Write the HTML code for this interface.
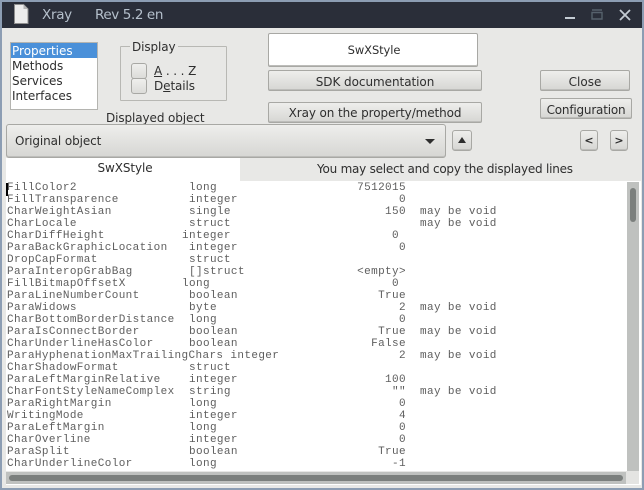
<!DOCTYPE html>
<html><head><meta charset="utf-8"><style>
*{box-sizing:border-box}
html,body{margin:0;padding:0;width:644px;height:490px;overflow:hidden;background:#8c9db3}
body{position:relative;font-family:"DejaVu Sans","Liberation Sans",sans-serif;font-size:12px;color:#2e2e2e}
.a{position:absolute}
.btn{position:absolute;border:1px solid #a8a8a4;border-radius:2px;background:linear-gradient(#eeeeec,#d6d6d3);text-align:center;color:#2e2e2e;white-space:nowrap;overflow:hidden;box-shadow:inset 0 -1px 0 #bdbdba}
.t{position:absolute;white-space:nowrap}
#code{position:absolute;left:6px;top:181px;width:634px;height:290px;background:#fff;overflow:hidden}
.r{position:absolute;left:1px;height:12px;width:620px;font:11px/12px "Liberation Mono",monospace;letter-spacing:.38px;color:#5e5e5e;white-space:pre;margin-top:1px}
.r span{position:absolute;top:0}
.r .n{left:0}.r .y{left:182px}.r .z{left:175px}.r .v{right:221px;text-align:right}.r .m{left:413px}
</style></head><body>
<div class="a" style="left:2px;top:2px;width:640px;height:486px;background:#e8e8e6"></div>
<div class="a" style="left:2px;top:2px;width:640px;height:26px;background:#2a2e39"></div>
<svg class="a" style="left:14px;top:4px" width="15" height="20" viewBox="0 0 15 20"><path d="M0.5 0.5H9.5L14 5V19.5H0.5Z" fill="#ececec" stroke="#8f8f8f"/><path d="M9.5 0.5L14 5H9.5Z" fill="#b5b5b5"/></svg>
<div class="t" style="left:42px;top:7px;font-size:13.5px;color:#b5c0cc;letter-spacing:-.3px">Xray</div>
<div class="t" style="left:95px;top:7px;font-size:13.5px;color:#b5c0cc;letter-spacing:-.4px">Rev 5.2 en</div>
<div class="a" style="left:565px;top:17px;width:10px;height:2px;background:#c4ccd4"></div>
<svg class="a" style="left:591px;top:9px" width="12" height="11"><path d="M1 1H11M1 3.5H11V10H1ZM1 3.5V10" fill="none" stroke="#56616c" stroke-width="1.4"/></svg>
<svg class="a" style="left:619px;top:9px" width="12" height="12"><path d="M1 1L11 11M11 1L1 11" stroke="#c4ccd4" stroke-width="1.8"/></svg>

<div class="a" style="left:10px;top:42px;width:88px;height:68px;background:#fff;border:1px solid #b4b4b0"></div>
<div class="a" style="left:11px;top:43px;width:86px;height:15px;background:#4a90d9"></div>
<div class="t" style="left:12px;top:44px;font-size:12px;line-height:15px;color:#fff">Properties</div>
<div class="t" style="left:12px;top:59px;font-size:12px;line-height:15px">Methods</div>
<div class="t" style="left:12px;top:74px;font-size:12px;line-height:15px">Services</div>
<div class="t" style="left:12px;top:89px;font-size:12px;line-height:15px">Interfaces</div>

<div class="a" style="left:120px;top:46px;width:107px;height:55px;border:1px solid #b8b8b4;border-radius:1px"></div>
<div class="t" style="left:130px;top:39px;padding:0 2px;height:15px;background:#e8e8e6;font-size:12px;line-height:16px;letter-spacing:-.1px">Display</div>
<div class="a" style="left:131px;top:63px;width:16px;height:16px;border:1px solid #a8a8a4;border-radius:3px;background:linear-gradient(#efefed,#dcdcd9)"></div>
<div class="a" style="left:131px;top:78px;width:16px;height:16px;border:1px solid #a8a8a4;border-radius:3px;background:linear-gradient(#efefed,#dcdcd9)"></div>
<div class="t" style="left:154px;top:64px;font-size:12px;line-height:15px;letter-spacing:-.1px"><u>A</u> . . . Z</div>
<div class="t" style="left:154px;top:79px;font-size:12px;line-height:15px;letter-spacing:-.1px">D<u>e</u>tails</div>
<div class="t" style="left:106px;top:111px;font-size:12px;line-height:15px;letter-spacing:-.1px">Displayed object</div>

<div class="btn" style="left:268px;top:33px;width:210px;height:34px;background:#fff;line-height:32px;font-size:11.5px;letter-spacing:-.1px;padding-left:2px">SwXStyle</div>
<div class="btn" style="left:268px;top:70px;width:214px;height:21px;line-height:22px;font-size:12px;letter-spacing:-.05px">SDK documentation</div>
<div class="btn" style="left:268px;top:102px;width:214px;height:21px;line-height:21px;font-size:12px;letter-spacing:-.1px">Xray on the property/method</div>
<div class="btn" style="left:540px;top:70px;width:90px;height:21px;line-height:22px;font-size:12px">Close</div>
<div class="btn" style="left:540px;top:98px;width:92px;height:21px;line-height:22px;font-size:12px;letter-spacing:-.2px">Configuration</div>

<div class="btn" style="left:6px;top:124px;width:440px;height:34px;text-align:left;padding-left:8px;line-height:32px;font-size:12px;letter-spacing:-.1px;border-radius:3px">Original object</div>
<div class="a" style="left:425px;top:139px;width:0;height:0;border-left:5px solid transparent;border-right:5px solid transparent;border-top:5px solid #2e2e2e"></div>
<div class="btn" style="left:452px;top:130px;width:20px;height:21px;border-radius:3px"></div>
<div class="a" style="left:458px;top:137px;width:0;height:0;border-left:4px solid transparent;border-right:4px solid transparent;border-bottom:6px solid #2e2e2e"></div>
<div class="btn" style="left:580px;top:130px;width:18px;height:21px;line-height:20px;font-size:11px;border-radius:3px;font-weight:bold">&lt;</div>
<div class="btn" style="left:610px;top:130px;width:18px;height:21px;line-height:20px;font-size:11px;border-radius:3px;font-weight:bold">&gt;</div>

<div class="a" style="left:6px;top:158px;width:234px;height:24px;background:#fff"></div>
<div class="t" style="left:8px;top:160px;width:234px;text-align:center;font-size:12px;line-height:16px;letter-spacing:-.1px">SwXStyle</div>
<div class="t" style="left:317px;top:161px;font-size:12px;line-height:16px;letter-spacing:-.23px">You may select and copy the displayed lines</div>

<div id="code">
<div class="a" style="left:0;top:2px;width:2px;height:13px;background:#000"></div>
<div class="r" style="top:0"><span class="n">FillColor2</span><span class="y">long</span><span class="v">7512015</span></div>
<div class="r" style="top:12px"><span class="n">FillTransparence</span><span class="y">integer</span><span class="v">0</span></div>
<div class="r" style="top:24px"><span class="n">CharWeightAsian</span><span class="y">single</span><span class="v">150</span><span class="m">may be void</span></div>
<div class="r" style="top:36px"><span class="n">CharLocale</span><span class="y">struct</span><span class="m">may be void</span></div>
<div class="r" style="top:48px"><span class="n">CharDiffHeight</span><span class="z">integer</span><span class="v" style="right:228px">0</span></div>
<div class="r" style="top:60px"><span class="n">ParaBackGraphicLocation</span><span class="y">integer</span><span class="v">0</span></div>
<div class="r" style="top:72px"><span class="n">DropCapFormat</span><span class="y">struct</span></div>
<div class="r" style="top:84px"><span class="n">ParaInteropGrabBag</span><span class="y">[]struct</span><span class="v">&lt;empty&gt;</span></div>
<div class="r" style="top:96px"><span class="n">FillBitmapOffsetX</span><span class="z">long</span><span class="v" style="right:228px">0</span></div>
<div class="r" style="top:108px"><span class="n">ParaLineNumberCount</span><span class="y">boolean</span><span class="v">True</span></div>
<div class="r" style="top:120px"><span class="n">ParaWidows</span><span class="y">byte</span><span class="v">2</span><span class="m">may be void</span></div>
<div class="r" style="top:132px"><span class="n">CharBottomBorderDistance</span><span class="y">long</span><span class="v">0</span></div>
<div class="r" style="top:144px"><span class="n">ParaIsConnectBorder</span><span class="y">boolean</span><span class="v">True</span><span class="m">may be void</span></div>
<div class="r" style="top:156px"><span class="n">CharUnderlineHasColor</span><span class="y">boolean</span><span class="v">False</span></div>
<div class="r" style="top:168px"><span class="n">ParaHyphenationMaxTrailingChars integer</span><span class="v">2</span><span class="m">may be void</span></div>
<div class="r" style="top:180px"><span class="n">CharShadowFormat</span><span class="y">struct</span></div>
<div class="r" style="top:192px"><span class="n">ParaLeftMarginRelative</span><span class="y">integer</span><span class="v">100</span></div>
<div class="r" style="top:204px"><span class="n">CharFontStyleNameComplex</span><span class="y">string</span><span class="v">""</span><span class="m">may be void</span></div>
<div class="r" style="top:216px"><span class="n">ParaRightMargin</span><span class="y">long</span><span class="v">0</span></div>
<div class="r" style="top:228px"><span class="n">WritingMode</span><span class="y">integer</span><span class="v">4</span></div>
<div class="r" style="top:240px"><span class="n">ParaLeftMargin</span><span class="y">long</span><span class="v">0</span></div>
<div class="r" style="top:252px"><span class="n">CharOverline</span><span class="y">integer</span><span class="v">0</span></div>
<div class="r" style="top:264px"><span class="n">ParaSplit</span><span class="y">boolean</span><span class="v">True</span></div>
<div class="r" style="top:276px"><span class="n">CharUnderlineColor</span><span class="y">long</span><span class="v">-1</span></div>
</div>
<div class="a" style="left:627px;top:182px;width:12px;height:289px;background:#bfc1bf"></div>
<div class="a" style="left:630px;top:188px;width:6px;height:34px;border-radius:3px;background:#7b7f7d"></div>
<div class="a" style="left:6px;top:472px;width:620px;height:12px;background:#bfc1bf"></div>
<div class="a" style="left:9px;top:475px;width:614px;height:6px;border-radius:3px;background:#7b7f7d"></div>
<div class="a" style="left:626px;top:471px;width:13px;height:13px;background:#e4e4e2"></div>
<div class="a" style="left:639px;top:181px;width:2px;height:304px;background:#fff"></div>
<div class="a" style="left:6px;top:484px;width:635px;height:1px;background:#fff"></div>
</body></html>
